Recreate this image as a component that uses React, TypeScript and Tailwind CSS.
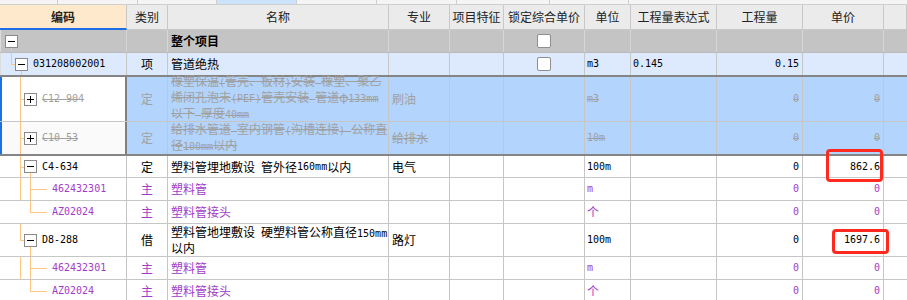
import React from "react";

const LINE = "bg-[#fdc67e]";

function T({ s, strike }: { s: string; strike?: boolean }) {
  const parts = s.split(/([\x20-\x7e]+)/).filter((p) => p.length > 0);
  const st = strike ? "line-through decoration-[#a0a0a0]" : "";
  return (
    <>
      {parts.map((p, i) =>
        /^[\x20-\x7e]+$/.test(p) ? (
          <span key={i} className={`font-['DejaVu_Sans_Mono',monospace] text-[10px] ${st}`}>
            {p}
          </span>
        ) : (
          <span key={i} className={st}>
            {p}
          </span>
        )
      )}
    </>
  );
}

function Lines({ lines, strike, cls = "" }: { lines: string[]; strike?: boolean; cls?: string }) {
  return (
    <div className={`flex flex-col leading-[14px] ${cls}`}>
      {lines.map((l, i) => (
        <div key={i} className="whitespace-pre">
          <T s={l} strike={strike} />
        </div>
      ))}
    </div>
  );
}

type CellProps = {
  w: string;
  a?: "l" | "c" | "r" | "n";
  bc?: string;
  br?: string;
  cls?: string;
  children?: React.ReactNode;
};

function Cell({ w, a = "l", bc = "border-[#c6c6c6]", br = "border-r", cls = "", children }: CellProps) {
  const al =
    a === "c" ? "justify-center" : a === "r" ? "justify-end pr-[3px]" : a === "l" ? "justify-start pl-[3px]" : "";
  return (
    <div className={`relative h-full shrink-0 flex items-center whitespace-pre ${br} ${bc} ${w} ${al} ${cls}`}>
      {children}
    </div>
  );
}

function Box({ plus }: { plus?: boolean }) {
  return (
    <span className="relative z-10 w-[13px] h-[13px] shrink-0 border border-[#8a8a8a] bg-white flex items-center justify-center">
      <span className="absolute w-[7px] h-px bg-black" />
      {plus && <span className="absolute h-[7px] w-px bg-black" />}
    </span>
  );
}

function Check() {
  return <span className="w-[14px] h-[14px] bg-white border border-[#8e8e8e] rounded-[2px]" />;
}

function RedBox({ cls }: { cls: string }) {
  return <span className={`absolute z-20 border-[3px] border-[#ff2a1f] rounded-[4px] ${cls}`} />;
}

const W = {
  code: "w-[127px]",
  cat: "w-[41px]",
  name: "w-[221px]",
  major: "w-[61px]",
  feat: "w-[54px]",
  lock: "w-[81px]",
  unit: "w-[46px]",
  expr: "w-[86px]",
  qty: "w-[86px]",
  price: "w-[81px]",
  rest: "w-[23px]",
};

function ChildRow({ last, code, name, unit }: { last: boolean; code: string; name: string; unit: string }) {
  const p = "text-[#a23cc8]";
  return (
    <div className="flex h-[23px] bg-white border-b border-[#c6c6c6]">
      <Cell w={W.code} a="n" cls={`pl-[52px] ${p}`}>
        {!last && <span className={`absolute top-0 bottom-0 left-[20px] w-px ${LINE}`} />}
        {last ? (
          <span className={`absolute top-0 h-1/2 left-[30px] w-px ${LINE}`} />
        ) : (
          <span className={`absolute top-0 bottom-0 left-[30px] w-px ${LINE}`} />
        )}
        <span className={`absolute top-1/2 left-[30px] w-[17px] h-px ${LINE}`} />
        <T s={code} />
      </Cell>
      <Cell w={W.cat} a="c" cls={p}>主</Cell>
      <Cell w={W.name} cls={p}>
        <T s={name} />
      </Cell>
      <Cell w={W.major} />
      <Cell w={W.feat} />
      <Cell w={W.lock} />
      <Cell w={W.unit} cls={`pl-[2px] ${p}`} a="n">
        <T s={unit} />
      </Cell>
      <Cell w={W.expr} />
      <Cell w={W.qty} a="r" cls={p}>
        <T s="0" />
      </Cell>
      <Cell w={W.price} a="r" cls={p}>
        <T s="0" />
      </Cell>
      <Cell w={W.rest} br="" />
    </div>
  );
}

export default function App() {
  const gray = "text-[#a0a0a0]";
  return (
    <div className="w-[907px] h-[300px] overflow-hidden bg-white font-['Noto_Sans_CJK_SC',sans-serif] text-[12px] leading-[14px] text-black">
      {/* top strip */}
      <div className="flex h-[5px] bg-[#f4f4f4] border-b border-[#cfcfcf]">
        <div className="w-[58px] border-r border-[#cfcfcf]" />
        <div className="w-[80px] border-r border-[#cfcfcf]" />
        <div className="w-[79px] border-r border-[#cfcfcf]" />
        <div className="w-[80px] border-r border-[#cfcfcf] bg-[#cce4fb]" />
        <div className="w-[80px] border-r border-[#cfcfcf]" />
        <div className="w-[80px] border-r border-[#cfcfcf]" />
        <div className="w-[93px] border-r border-[#cfcfcf]" />
        <div className="w-[79px] border-r border-[#cfcfcf]" />
        <div className="flex-1" />
      </div>

      {/* header */}
      <div className="flex h-[25px] bg-[#ebebeb] text-[#222]">
        <Cell w={W.code} a="c" bc="border-[#c8c8c8]" cls="bg-[#fee9cc] font-bold border-b-2 border-b-[#1c6fe4]">
          编码
        </Cell>
        <Cell w={W.cat} a="c" bc="border-[#c8c8c8]" cls="border-b">类别</Cell>
        <Cell w={W.name} a="c" bc="border-[#c8c8c8]" cls="border-b">名称</Cell>
        <Cell w={W.major} a="c" bc="border-[#c8c8c8]" cls="border-b">专业</Cell>
        <Cell w={W.feat} a="c" bc="border-[#c8c8c8]" cls="border-b">项目特征</Cell>
        <Cell w={W.lock} a="c" bc="border-[#c8c8c8]" cls="border-b">锁定综合单价</Cell>
        <Cell w={W.unit} a="c" bc="border-[#c8c8c8]" cls="border-b">单位</Cell>
        <Cell w={W.expr} a="c" bc="border-[#c8c8c8]" cls="border-b">工程量表达式</Cell>
        <Cell w={W.qty} a="c" bc="border-[#c8c8c8]" cls="border-b">工程量</Cell>
        <Cell w={W.price} a="c" bc="border-[#c8c8c8]" cls="border-b">单价</Cell>
        <Cell w={W.rest} a="c" bc="border-[#c8c8c8]" cls="border-b" />
      </div>

      {/* 整个项目 */}
      <div className="flex h-[23px] bg-[#c4c4c4] border-b border-[#bcbcbc]">
        <Cell w={W.code} a="n" bc="border-[#d6d6d6]" cls="pl-[4px] border-l border-l-[#dcdcdc]">
          <span className={`absolute top-1/2 bottom-0 left-[10px] w-px ${LINE}`} />
          <Box />
        </Cell>
        <Cell w={W.cat} bc="border-[#d6d6d6]" />
        <Cell w={W.name} bc="border-[#d6d6d6]" cls="font-bold">整个项目</Cell>
        <Cell w={W.major} bc="border-[#d6d6d6]" />
        <Cell w={W.feat} bc="border-[#d6d6d6]" />
        <Cell w={W.lock} a="c" bc="border-[#d6d6d6]">
          <Check />
        </Cell>
        <Cell w={W.unit} bc="border-[#d6d6d6]" />
        <Cell w={W.expr} bc="border-[#d6d6d6]" />
        <Cell w={W.qty} bc="border-[#d6d6d6]" />
        <Cell w={W.price} bc="border-[#d6d6d6]" />
        <Cell w={W.rest} br="" />
      </div>

      {/* 031208002001 */}
      <div className="flex h-[24px] bg-[#dde9fc] border-b-2 border-[#858585]">
        <Cell w={W.code} a="n" cls="pl-[14px] gap-[5px] border-l border-l-[#dcdcdc]">
          <span className={`absolute top-0 h-1/2 left-[10px] w-px ${LINE}`} />
          <span className={`absolute top-1/2 left-[10px] w-[4px] h-px ${LINE}`} />
          <span className={`absolute top-1/2 bottom-0 left-[20px] w-px ${LINE}`} />
          <Box />
          <T s="031208002001" />
        </Cell>
        <Cell w={W.cat} a="c">项</Cell>
        <Cell w={W.name}>管道绝热</Cell>
        <Cell w={W.major} />
        <Cell w={W.feat} />
        <Cell w={W.lock} a="c">
          <Check />
        </Cell>
        <Cell w={W.unit} a="n" cls="pl-[2px]">
          <T s="m3" />
        </Cell>
        <Cell w={W.expr} a="n" cls="pl-[2px]">
          <T s="0.145" />
        </Cell>
        <Cell w={W.qty} a="r">
          <T s="0.15" />
        </Cell>
        <Cell w={W.price} />
        <Cell w={W.rest} br="" />
      </div>

      {/* C12-904 */}
      <div className="flex h-[45px] bg-[#b3d5fd] border-b border-[#c6c6c6]">
        <Cell w={W.code} a="n" br="border-r-2" bc="border-[#808080]" cls={`bg-white pl-[24px] gap-[5px] ${gray}`}>
          <span className="absolute top-0 bottom-0 left-0 w-[2px] bg-[#1c6fe4]" />
          <span className={`absolute top-0 bottom-0 left-[20px] w-px ${LINE}`} />
          <span className={`absolute top-1/2 left-[20px] w-[4px] h-px ${LINE}`} />
          <Box plus />
          <T s="C12-904" strike />
        </Cell>
        <Cell w={W.cat} a="c" cls={gray}>定</Cell>
        <Cell w={W.name} cls={gray}>
          <Lines
            strike
            cls="mb-[2px]"
            lines={["橡塑保温(管壳、板材)安装 橡塑、聚乙", "烯闭孔泡末(PEF)管壳安装 管道φ133mm", "以下 厚度40mm"]}
          />
        </Cell>
        <Cell w={W.major} cls={gray}>
          <T s="刷油" />
        </Cell>
        <Cell w={W.feat} />
        <Cell w={W.lock} />
        <Cell w={W.unit} a="n" cls={`pl-[2px] ${gray}`}>
          <T s="m3" strike />
        </Cell>
        <Cell w={W.expr} />
        <Cell w={W.qty} a="r" cls={gray}>
          <T s="0" strike />
        </Cell>
        <Cell w={W.price} a="r" cls={gray}>
          <T s="0" strike />
        </Cell>
        <Cell w={W.rest} br="" />
      </div>

      {/* C10-53 */}
      <div className="flex h-[34px] bg-[#b3d5fd] border-b-2 border-[#858585]">
        <Cell w={W.code} a="n" br="border-r-2" bc="border-[#808080]" cls={`bg-[#fafafa] pl-[24px] gap-[5px] ${gray}`}>
          <span className="absolute top-0 bottom-0 left-0 w-[2px] bg-[#1c6fe4]" />
          <span className={`absolute top-0 bottom-0 left-[20px] w-px ${LINE}`} />
          <span className={`absolute top-1/2 left-[20px] w-[4px] h-px ${LINE}`} />
          <Box plus />
          <T s="C10-53" strike />
        </Cell>
        <Cell w={W.cat} a="c" cls={gray}>定</Cell>
        <Cell w={W.name} cls={gray}>
          <Lines strike lines={["给排水管道 室内钢管(沟槽连接) 公称直", "径100mm以内"]} />
        </Cell>
        <Cell w={W.major} cls={gray}>
          <T s="给排水" strike />
        </Cell>
        <Cell w={W.feat} />
        <Cell w={W.lock} />
        <Cell w={W.unit} a="n" cls={`pl-[2px] ${gray}`}>
          <T s="10m" strike />
        </Cell>
        <Cell w={W.expr} />
        <Cell w={W.qty} a="r" cls={gray}>
          <T s="0" strike />
        </Cell>
        <Cell w={W.price} a="r" cls={gray}>
          <T s="0" strike />
        </Cell>
        <Cell w={W.rest} br="" />
      </div>

      {/* C4-634 */}
      <div className="flex h-[22px] bg-white border-b border-[#c6c6c6]">
        <Cell w={W.code} a="n" cls="pl-[24px] gap-[5px]">
          <span className={`absolute top-0 bottom-0 left-[20px] w-px ${LINE}`} />
          <span className={`absolute top-1/2 left-[20px] w-[4px] h-px ${LINE}`} />
          <span className={`absolute top-1/2 bottom-0 left-[30px] w-px ${LINE}`} />
          <Box />
          <T s="C4-634" />
        </Cell>
        <Cell w={W.cat} a="c">定</Cell>
        <Cell w={W.name}>
          <T s="塑料管埋地敷设 管外径160mm以内" />
        </Cell>
        <Cell w={W.major}>电气</Cell>
        <Cell w={W.feat} />
        <Cell w={W.lock} />
        <Cell w={W.unit} a="n" cls="pl-[2px]">
          <T s="100m" />
        </Cell>
        <Cell w={W.expr} />
        <Cell w={W.qty} a="r">
          <T s="0" />
        </Cell>
        <Cell w={W.price} a="r">
          <RedBox cls="left-[23px] top-[-7px] w-[57px] h-[33px]" />
          <T s="862.6" />
        </Cell>
        <Cell w={W.rest} br="" />
      </div>

      <ChildRow last={false} code="462432301" name="塑料管" unit="m" />
      <ChildRow last code="AZ02024" name="塑料管接头" unit="个" />

      {/* D8-288 */}
      <div className="flex h-[33px] bg-white border-b border-[#c6c6c6]">
        <Cell w={W.code} a="n" cls="pl-[24px] gap-[5px]">
          <span className={`absolute top-0 h-1/2 left-[20px] w-px ${LINE}`} />
          <span className={`absolute top-1/2 left-[20px] w-[4px] h-px ${LINE}`} />
          <span className={`absolute top-1/2 bottom-0 left-[30px] w-px ${LINE}`} />
          <Box />
          <T s="D8-288" />
        </Cell>
        <Cell w={W.cat} a="c">借</Cell>
        <Cell w={W.name}>
          <Lines lines={["塑料管地埋敷设 硬塑料管公称直径150mm", "以内"]} />
        </Cell>
        <Cell w={W.major}>路灯</Cell>
        <Cell w={W.feat} />
        <Cell w={W.lock} />
        <Cell w={W.unit} a="n" cls="pl-[2px]">
          <T s="100m" />
        </Cell>
        <Cell w={W.expr} />
        <Cell w={W.qty} a="r">
          <T s="0" />
        </Cell>
        <Cell w={W.price} a="r">
          <RedBox cls="left-[29px] top-[5px] w-[57px] h-[25px]" />
          <T s="1697.6" />
        </Cell>
        <Cell w={W.rest} br="" />
      </div>

      <ChildRow last={false} code="462432301" name="塑料管" unit="m" />
      <ChildRow last code="AZ02024" name="塑料管接头" unit="个" />
    </div>
  );
}
